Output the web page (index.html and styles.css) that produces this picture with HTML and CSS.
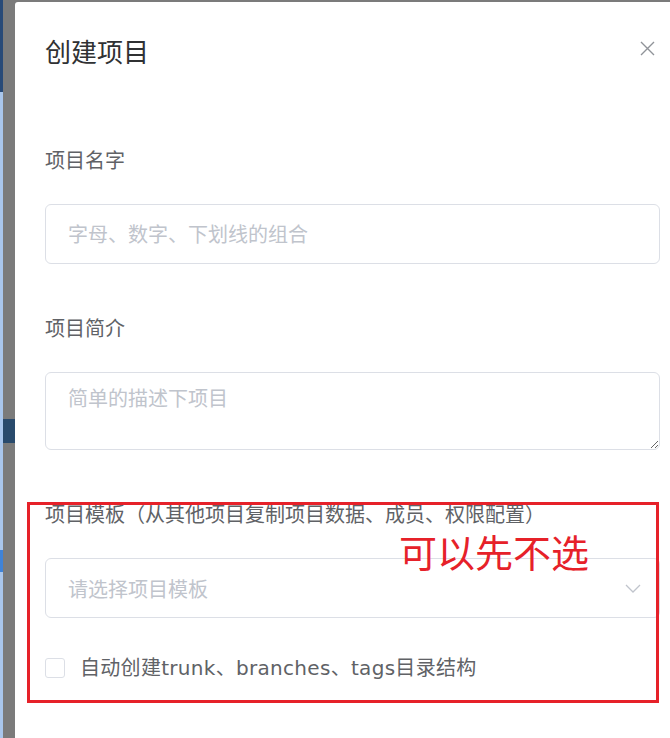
FILE: index.html
```html
<!DOCTYPE html>
<html lang="zh-CN">
<head>
  <meta charset="UTF-8" />
  <meta name="viewport" content="width=device-width, initial-scale=1" />
  <title>创建项目</title>
  <link rel="stylesheet" href="styles.css">
</head>
<body>
  <div class="peek">
    <div class="peek-edge">
      <div class="edge-nav"></div>
      <div class="edge-light"></div>
      <div class="edge-active"></div>
      <div class="edge-light grow"></div>
    </div>
    <div class="peek-bar">
      <div class="bar-gap"></div>
      <div class="bar-row"></div>
    </div>
  </div>

  <div class="dialog">
    <div class="dialog-header">
      <span class="dialog-title">创建项目</span>
      <button class="dialog-close" aria-label="关闭">
        <svg width="15" height="15" viewBox="0 0 15 15">
          <path d="M1 1 L14 14 M14 1 L1 14" stroke="#909399" stroke-width="1.4" fill="none" />
        </svg>
      </button>
    </div>

    <div class="dialog-body">
      <div class="form-item">
        <label class="form-label">项目名字</label>
        <input class="form-input" type="text" placeholder="字母、数字、下划线的组合" />
      </div>

      <div class="form-item">
        <label class="form-label">项目简介</label>
        <textarea class="form-textarea" placeholder="简单的描述下项目"></textarea>
      </div>

      <div class="form-item template">
        <label class="form-label">项目模板（从其他项目复制项目数据、成员、权限配置）</label>
        <div class="form-select">
          <span class="select-placeholder">请选择项目模板</span>
          <svg class="select-arrow" width="16" height="9" viewBox="0 0 16 9">
            <path d="M1 1 L8 8 L15 1" stroke="#c0c4cc" stroke-width="1.3" fill="none" />
          </svg>
        </div>
        <label class="check-row">
          <span class="check-box"></span>
          <span class="check-text">自动创建trunk、branches、tags目录结构</span>
        </label>

        <!-- 标注 -->
        <div class="annotation">
          <span class="annotation-text">可以先不选</span>
        </div>
      </div>
    </div>
  </div>
</body>
</html>
```

FILE: styles.css
```css
body {
  margin: 0;
  height: 738px;
  overflow: hidden;
  display: flex;
  background: #7b7b7b;
  font-family: "Noto Sans CJK SC", "Noto Sans", sans-serif;
}

/* 背后页面露出的一条 */
.peek {
  display: flex;
  width: 15px;
  flex-shrink: 0;
}

.peek-edge {
  width: 3px;
  display: flex;
  flex-direction: column;
}

.edge-nav {
  height: 92px;
  background: #284a78;
}

.edge-light {
  height: 458px;
  background: #a9c6ec;
}

.edge-light.grow {
  flex: 1;
  height: auto;
}

.edge-active {
  height: 22px;
  background: #3f83d8;
}

.peek-bar {
  flex: 1;
  display: flex;
  flex-direction: column;
}

.bar-gap {
  height: 419px;
}

.bar-row {
  height: 24px;
  background: #294a6c;
}

/* 弹窗 */
.dialog {
  width: 675px;
  flex-shrink: 0;
  margin-top: 2px;
  background: #fff;
  border-top-left-radius: 3px;
  padding: 0 30px;
  box-sizing: border-box;
}

.dialog-header {
  display: flex;
  justify-content: space-between;
  align-items: flex-start;
  padding-top: 31px;
}

.dialog-title {
  font-size: 26px;
  line-height: 36px;
  color: #303133;
}

.dialog-close {
  border: none;
  background: none;
  padding: 0;
  margin: 8px 5px 0 0;
  cursor: pointer;
  line-height: 0;
}

.dialog-body {
  padding-top: 79px;
}

.form-item {
  margin-bottom: 52px;
}

.form-label {
  display: block;
  font-size: 20px;
  line-height: 24px;
  color: #606266;
  margin-bottom: 32px;
}

.form-input,
.form-textarea,
.form-select {
  display: block;
  width: 100%;
  box-sizing: border-box;
  border: 1px solid #dcdfe6;
  border-radius: 6px;
  font-family: inherit;
  font-size: 20px;
  color: #606266;
  background: #fff;
  outline: none;
}

.form-input {
  height: 60px;
  padding: 0 22px 2px;
}

.form-textarea {
  height: 78px;
  padding: 10px 22px;
  line-height: 30px;
  resize: vertical;
}

.form-input::placeholder,
.form-textarea::placeholder {
  color: #c0c4cc;
}

.template {
  position: relative;
}

.form-select {
  height: 60px;
  padding: 0 18px 0 22px;
  display: flex;
  align-items: center;
  justify-content: space-between;
}

.select-placeholder {
  color: #c0c4cc;
}

.check-row {
  display: flex;
  align-items: center;
  gap: 15px;
  margin-top: 38px;
  cursor: pointer;
}

.check-box {
  width: 20px;
  height: 20px;
  box-sizing: border-box;
  border: 1px solid #dcdfe6;
  border-radius: 3px;
}

.check-text {
  font-family: "DejaVu Sans", "Noto Sans CJK SC", sans-serif;
  font-size: 20px;
  line-height: 24px;
  letter-spacing: 0.3px;
  color: #606266;
}

/* 红框标注 */
.annotation {
  position: absolute;
  top: 0;
  left: -18px;
  right: 1px;
  height: 201px;
  box-sizing: border-box;
  border: 3px solid #e62129;
  pointer-events: none;
}

.annotation-text {
  position: absolute;
  left: 369px;
  top: 24px;
  font-size: 38px;
  line-height: 44px;
  color: #e62129;
}
```
